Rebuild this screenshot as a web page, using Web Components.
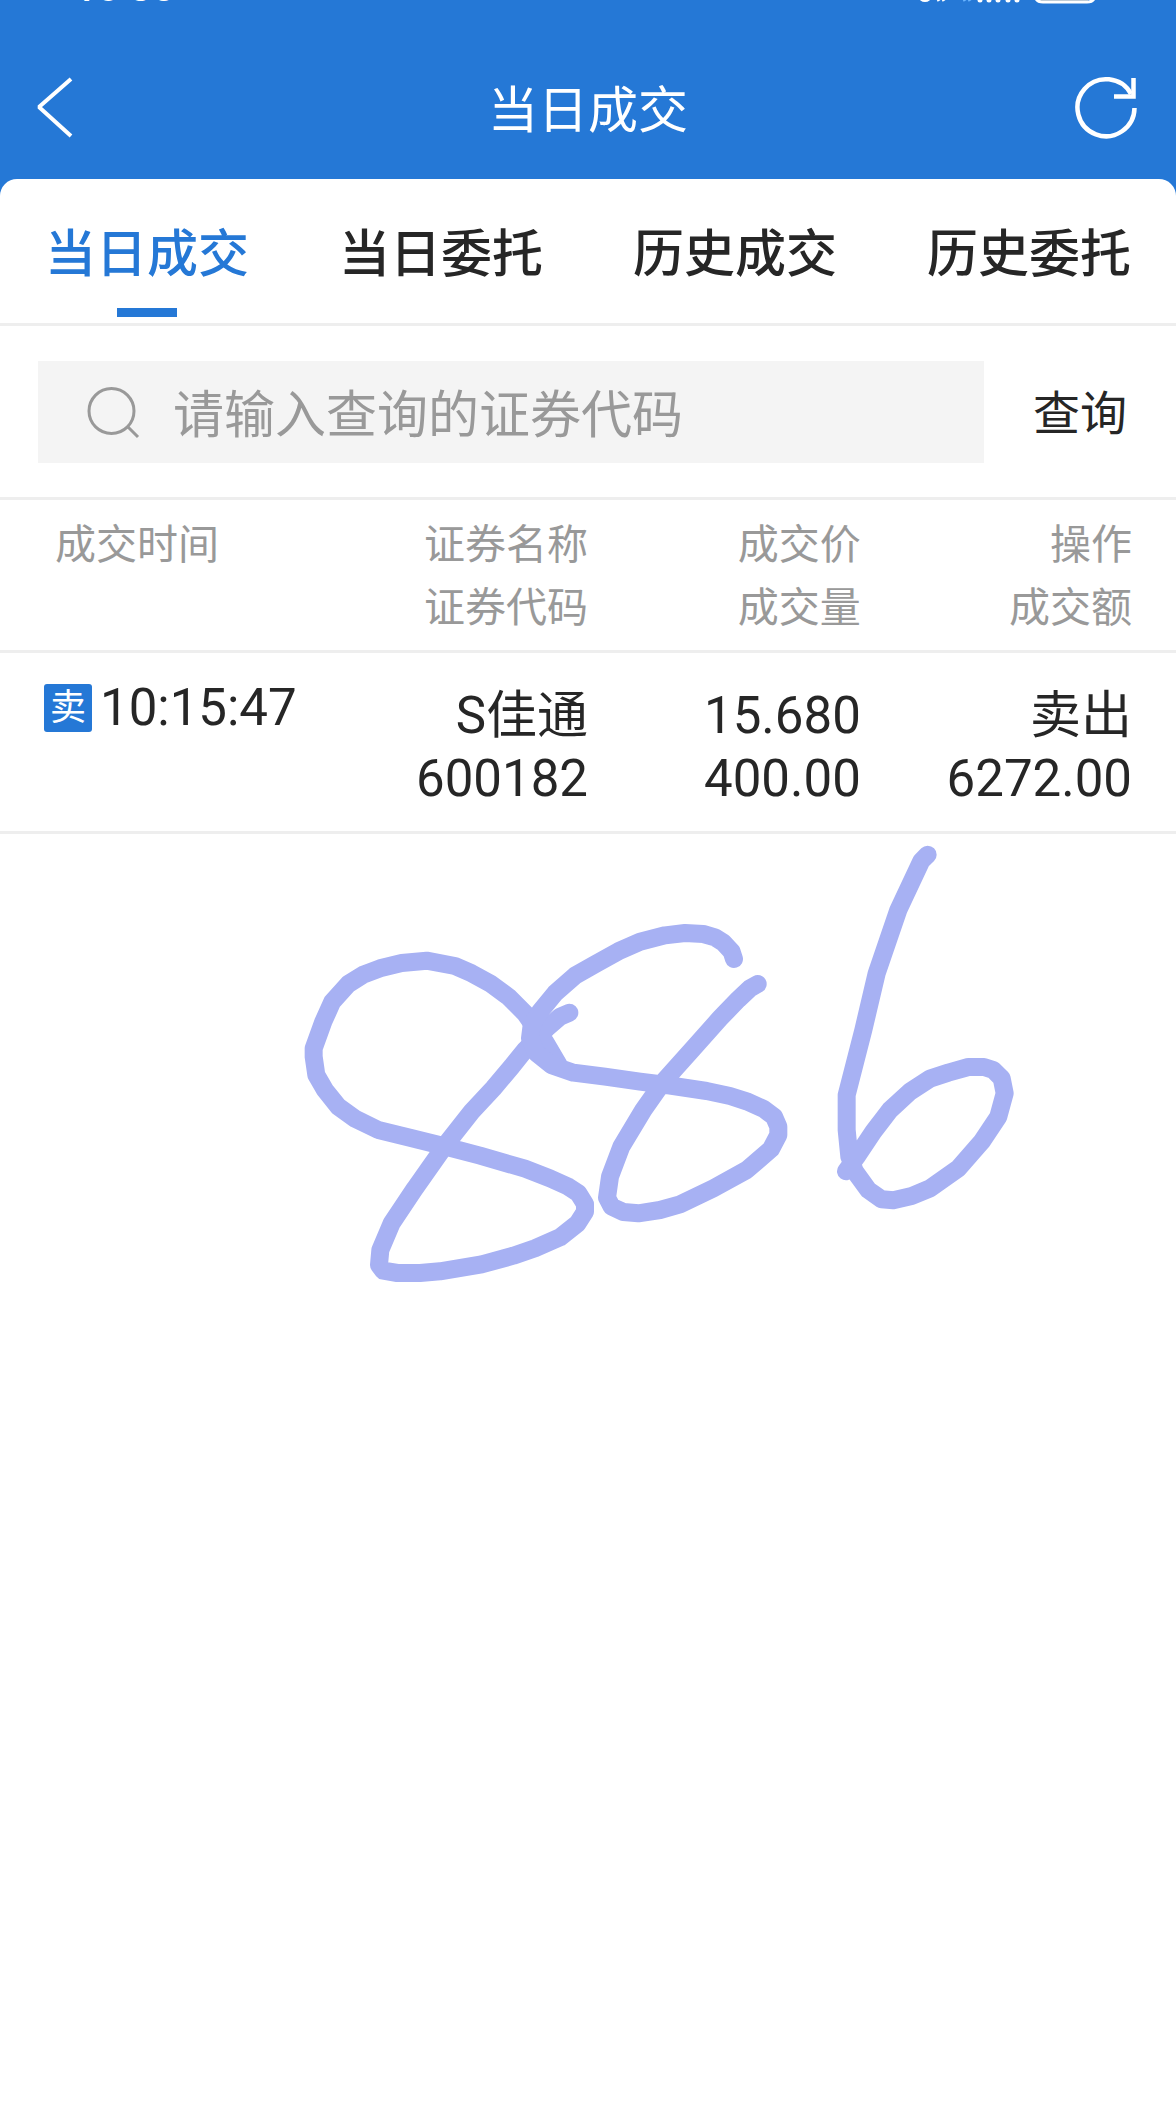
<!DOCTYPE html>
<html lang="zh-CN">
<head>
<meta charset="utf-8">
<meta name="viewport" content="width=device-width, initial-scale=1">
<title>当日成交</title>
<style>
  :root { --blue: #2578d6; --ink: #262626; --muted: #999; --line: #eee; --field: #f4f4f4; --big: 51px; }
  body { margin: 0; min-height: 100vh; background: #fff; color: var(--ink);
    font-family: Roboto, "Noto Sans CJK SC", sans-serif; font-size: var(--big); }
</style>
</head>
<body>
<trade-app>
  <app-header slot="header">当日成交</app-header>
  <tab-bar>
    <tab-item active>当日成交</tab-item>
    <tab-item>当日委托</tab-item>
    <tab-item>历史成交</tab-item>
    <tab-item>历史委托</tab-item>
  </tab-bar>
  <search-bar></search-bar>
  <deals-table></deals-table>
  <hand-note></hand-note>
</trade-app>
<script>
const define = (name, html) => customElements.define(name, class extends HTMLElement {
  constructor() {
    super();
    const t = document.createElement('template');
    t.innerHTML = html;
    this.attachShadow({ mode: 'open' }).append(t.content.cloneNode(true));
  }
});

define('trade-app', `
<style>
  :host { display: block; background: var(--blue); }
  main { background: #fff; border-radius: 17px 17px 0 0; min-height: calc(100vh - 179px); }
</style>
<slot name="header"></slot>
<main><slot></slot></main>`);

define('status-bar', `
<style>
  :host { display: flex; justify-content: space-between; align-items: flex-end; height: 12px; overflow: hidden;
    padding: 0 80px 0 74px; color: #fff; }
  time { display: flex; gap: 10px; padding-bottom: 8px; font-size: 40px; line-height: 32px; font-weight: 500; }
  svg { display: block; width: 178px; height: 12px; }
</style>
<time><span>10</span><span>38</span></time>
<svg viewBox="0 0 178 12" fill="none" stroke="#fff" aria-hidden="true">
  <path d="M3-1Q7 2 11-1M19-3l2 4M24-3l2 4" stroke-width="3"/>
  <path d="M45-3l2 4M50-3l2 4" stroke="#69b4ff" stroke-width="3"/>
  <path d="M62-4v4M71-4v4M80-4v4M90-4v4M99-4v4" stroke-width="5" stroke-linecap="round"/>
  <path d="M122-4h48v5h-48z" fill="#8098ad" stroke="none"/>
  <path d="M117-6Q117 2 125 2h44Q177 2 177-6" stroke-width="3"/>
</svg>`);

define('app-header', `
<style>
  :host { display: block; height: 179px; color: #fff; }
  .bar { display: grid; grid-template-columns: 120px 1fr 120px; align-items: start; padding: 60px 0 36px; height: 71px; }
  h1 { margin: 0; padding-top: 4px; font-size: 50px; line-height: 71px; font-weight: 400; text-align: center; }
  button { display: block; border: 0; padding: 0; background: none; color: inherit; height: 70px; width: 70px; }
  .back { margin-left: 20px; }
  .reload { margin-left: 16px; }
  svg { display: block; width: 70px; height: 70px; fill: none; stroke: currentColor; }
</style>
<status-bar></status-bar>
<div class="bar">
  <button class="back" aria-label="返回"><svg viewBox="0 0 70 70" stroke-width="4"><path d="M51 7 19 35l32 29" stroke-linejoin="bevel"/></svg></button>
  <h1><slot></slot></h1>
  <button class="reload" aria-label="刷新"><svg viewBox="0 0 70 70" stroke-width="4.500"><path d="M62.500 36A28.500 28.500 0 1 1 59 22"/><path d="M61.500 6V24.500H42"/></svg></button>
</div>`);

define('tab-bar', `
<style>
  :host { display: grid; grid-template-columns: repeat(4, 1fr); border-bottom: 3px solid var(--line); }
</style>
<slot></slot>`);

define('tab-item', `
<style>
  :host { display: block; }
  button { display: flex; flex-direction: column; align-items: center; width: 100%; border: 0; margin: 0;
    padding: 40px 0 6px; background: none; color: var(--ink); font: inherit; font-weight: 500; line-height: 71px; white-space: nowrap; }
  i { width: 60px; height: 9px; margin-top: 18px; }
  :host([active]) button { color: var(--blue); }
  :host([active]) i { background: var(--blue); }
</style>
<button><span><slot></slot></span><i></i></button>`);

define('search-bar', `
<style>
  :host { display: block; border-bottom: 3px solid var(--line); }
  form { display: flex; align-items: center; padding: 35px 0 34px 38px; }
  label { flex: 1; display: flex; align-items: center; min-width: 0; height: 102px; background: var(--field); padding-left: 47px; }
  svg { flex: none; width: 58px; height: 58px; margin-right: 30px; fill: none; stroke: var(--muted); stroke-width: 3; }
  input { flex: 1; min-width: 0; height: 71px; border: 0; padding: 6px 0 0; outline: 0; background: none; font: inherit; color: var(--ink); }
  input::placeholder { color: var(--muted); opacity: 1; }
  button { width: 192px; border: 0; padding: 2px 0 0; background: none; color: var(--ink); font: inherit; font-size: 47px; line-height: 71px; }
</style>
<form onsubmit="return false">
  <label for="code">
    <svg viewBox="0 0 58 58" aria-hidden="true"><circle cx="26.500" cy="28" r="22.500"/><path d="M42 43 53 54"/></svg>
    <input id="code" type="text" placeholder="请输入查询的证券代码" aria-label="证券代码">
  </label>
  <button>查询</button>
</form>`);

define('deals-table', `
<style>
  :host { display: block; }
  table { width: 100%; table-layout: fixed; border-spacing: 0; }
  th, td { padding: 0; border-bottom: 3px solid var(--line); text-align: right; vertical-align: top;
    font-weight: 400; line-height: 63px; white-space: nowrap; }
  th { padding: 14px 0 10px; color: var(--muted); font-size: 41px; }
  td { padding: 31px 0 21px; }
  th:first-child { text-align: left; padding-left: 55px; }
  td:first-child { padding-left: 44px; }
  th:last-child, td:last-child { padding-right: 44px; }
  span { display: block; }
  .time { display: flex; align-items: center; gap: 8px; line-height: 48px; }
  .badge { width: 48px; height: 48px; border-radius: 3px; background: var(--blue); color: #fff;
    font-size: 36px; line-height: 48px; text-align: center; }
</style>
<table>
  <colgroup><col style="width:27%"><col style="width:23%"><col style="width:23.2%"><col style="width:26.8%"></colgroup>
  <thead><tr>
    <th scope="col">成交时间</th>
    <th scope="col"><span>证券名称</span><span>证券代码</span></th>
    <th scope="col"><span>成交价</span><span>成交量</span></th>
    <th scope="col"><span>操作</span><span>成交额</span></th>
  </tr></thead>
  <tbody><tr>
    <td><div class="time"><span class="badge">卖</span><time>10:15:47</time></div></td>
    <td><span>S佳通</span><span>600182</span></td>
    <td><span>15.680</span><span>400.00</span></td>
    <td><span>卖出</span><span>6272.00</span></td>
  </tr></tbody>
</table>`);

define('hand-note', `
<style>
  :host { display: block; }
  svg { display: block; width: 100%; height: auto; fill: none; stroke: #a7b1f3; stroke-width: 54; stroke-linejoin: round; stroke-linecap: round; }
</style>
<svg viewBox="0 0 3528 1440" aria-hidden="true">
  <g transform="translate(840 -12)">
    <path d="M868 548 840 560 800 595 735 660 695 710 640 775 575 845 500 940 405 1075 335 1180 301 1260 297 1305 310 1322 352 1329 420 1329 480 1324 605 1303 700 1277 765 1255 840 1222 893 1180 915 1145V1122L895 1090 865 1070 810 1045 735 1016 600 977 490 948 390 923 295 900 225 866 175 830 135 780 109 735 101 680V655L130 575 157 515 205 462 250 434 300 415 365 399 440 392 525 408 575 430 630 460 685 500 735 550 770 600 795 635 835 703"/>
    <path d="M1362 387 1355 365 1330 338 1305 322 1270 312 1215 309 1155 316 1080 335 1015 364 950 400 885 437 825 490 780 545 755 585 750 625 770 670 815 706 880 728 975 740 1080 755 1160 765 1280 783 1350 798 1400 814 1450 836 1482 860 1495 890V915L1473 957 1400 1020 1300 1075 1200 1123 1140 1140 1075 1150 1030 1146 995 1130 981 1103 990 1040 1024 950 1090 840 1150 755 1240 655 1320 565 1375 508 1410 475 1433 462"/>
    <path d="M1943 74 1924 93 1855 240 1790 430 1750 600 1700 795V900L1708 980 1725 1025 1765 1080 1805 1108 1840 1111 1895 1098 1950 1075 2035 1015 2105 935 2155 860 2174 790 2165 745 2140 720 2112 711H2065L2005 728 1950 746 1890 785 1830 840 1780 905 1730 980 1698 1024"/>
  </g>
</svg>`);
</script>
</body>
</html>
